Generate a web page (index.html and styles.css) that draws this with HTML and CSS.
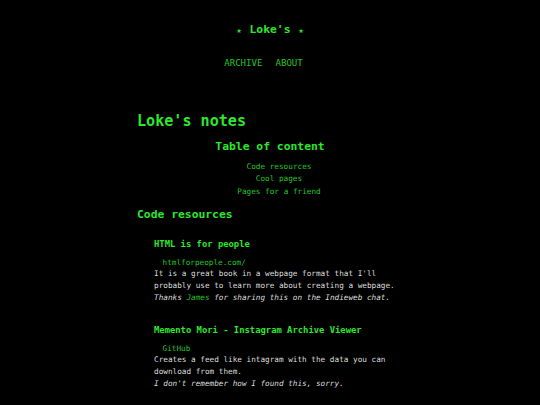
FILE: index.html
```html
<!DOCTYPE html>
<html lang="en">
<head>
<meta charset="utf-8">
<title>Loke's notes</title>
<link rel="stylesheet" href="styles.css">
</head>
<body>
<header class="site-header">
  <div class="site-title"><span class="star">★</span><span>Loke's</span><span class="star">★</span></div>
  <nav class="site-nav">
    <a href="#">ARCHIVE</a>
    <a href="#">ABOUT</a>
  </nav>
</header>
<main class="page">
  <h1 class="page-title">Loke's notes</h1>
  <section class="toc">
    <h2 class="toc-title">Table of content</h2>
    <ul class="toc-list">
      <li><a href="#">Code resources</a></li>
      <li><a href="#">Cool pages</a></li>
      <li><a href="#">Pages for a friend</a></li>
    </ul>
  </section>
  <h2 class="section-title">Code resources</h2>
  <article class="entry">
    <h3 class="entry-title">HTML is for people</h3>
    <a class="entry-link" href="#">htmlforpeople.com/</a>
    <p class="entry-text">It is a great book in a webpage format that I'll probably use to learn more about creating a webpage.</p>
    <p class="entry-note"><em>Thanks <a href="#">James</a> for sharing this on the Indieweb chat.</em></p>
  </article>
  <article class="entry">
    <h3 class="entry-title">Memento Mori - Instagram Archive Viewer</h3>
    <a class="entry-link" href="#">GitHub</a>
    <p class="entry-text">Creates a feed like intagram with the data you can download from them.</p>
    <p class="entry-note"><em>I don't remember how I found this, sorry.</em></p>
  </article>
</main>
</body>
</html>
```

FILE: styles.css
```css
html, body {
  margin: 0;
  padding: 0;
  background: #000;
}
body {
  font-family: "DejaVu Sans Mono", "Liberation Mono", monospace;
  color: #dcdcdc;
  font-size: 7.7px;
  line-height: 11.8px;
}
a {
  color: #27c227;
  text-decoration: none;
}
.site-header {
  display: flex;
  flex-direction: column;
  align-items: center;
  padding-top: 21px;
}
.site-title {
  display: flex;
  align-items: baseline;
  gap: 8px;
  color: #2ee62e;
  font-size: 11.35px;
  line-height: 16px;
  font-weight: bold;
}
.star {
  font-size: 8.5px;
  font-weight: normal;
}
.site-nav {
  display: flex;
  gap: 13px;
  padding-right: 13px;
  margin-top: 19.4px;
  font-size: 9.08px;
  line-height: 12px;
}
.page {
  width: 266px;
  margin: 0 auto;
  padding-top: 42.1px;
}
.page-title {
  margin: 0;
  color: #2ee62e;
  font-size: 15.1px;
  line-height: 20px;
}
.toc {
  text-align: center;
}
.toc-title {
  margin: 6.6px 0 0;
  color: #2ee62e;
  font-size: 11.35px;
  line-height: 16px;
}
.toc-list {
  list-style: none;
  margin: 7.2px 0 0;
  padding-left: 18px;
  line-height: 12.2px;
}
.section-title {
  margin: 8.5px 0 0;
  color: #2ee62e;
  font-size: 11.35px;
  line-height: 16px;
}
.entry {
  padding-left: 17px;
  margin-top: 15.5px;
}
.entry + .entry {
  margin-top: 20px;
}
.entry-title {
  margin: 0;
  color: #2ee62e;
  font-size: 8.86px;
  line-height: 12px;
}
.entry-link {
  display: block;
  margin-top: 6.8px;
  padding-left: 8.5px;
}
.entry-text, .entry-note {
  margin: 0;
}
```
